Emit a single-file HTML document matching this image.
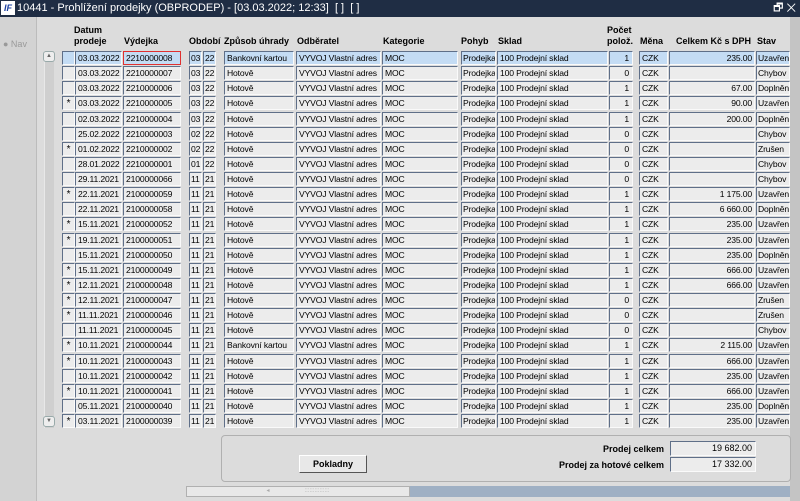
<!DOCTYPE html>
<html><head><meta charset="utf-8">
<style>
*{margin:0;padding:0;box-sizing:border-box}
body{width:800px;height:501px;overflow:hidden;background:#dcdcdc;font-family:"Liberation Sans",sans-serif;font-size:9px;color:#000;position:relative}
#title{position:absolute;left:0;top:0;width:800px;height:17px;background:#1f2d44;color:#fff;font-size:11px;line-height:17px;padding-left:17px}
#logo{position:absolute;left:1px;top:1px;width:14px;height:14px;background:#fff;color:#1a3fa0;font-weight:bold;font-style:italic;font-size:9px;line-height:14px;text-align:center}
#win{position:absolute;right:4px;top:0;color:#fff;font-size:11px;line-height:17px}
#left{position:absolute;left:0;top:17px;width:37px;height:484px;background:#d3d3d3;border-right:1px solid #bcbcbc}
#nav{position:absolute;left:3px;top:22px;color:#999;font-size:9px}
#right{position:absolute;left:790px;top:17px;width:10px;height:484px;background:#c4c4c4}
.h{position:absolute;font-weight:bold;font-size:9px;line-height:11px}
.r{position:absolute;left:0;width:800px;height:15px}
.c{position:absolute;top:0;height:14px;background:#ececec;border:1px solid;border-color:#5f6f88 #fafafa #fafafa #5f6f88;line-height:12px;padding-left:2px;white-space:nowrap;overflow:hidden;font-size:8.6px;letter-spacing:-0.15px}
.sel .c{background:#c4dcf4}
.a{left:62px;width:13px;text-align:center;padding:0;font-size:10px;line-height:14px}
.b{left:75px;width:47px}.d{left:123px;width:58px}
.e{left:189px;width:13px;padding-left:1px}.f{left:203px;width:13px;padding-left:1px}
.g{left:224px;width:70px}.i{left:296px;width:85px}.k{left:382px;width:76px}
.l{left:461px;width:35px;padding-left:1px}.m{left:497px;width:111px}
.n{left:609px;width:24px;text-align:right;padding-right:3px}
.o{left:639px;width:29px}.p{left:669px;width:86px;text-align:right;padding-right:2px}
.q{left:756px;width:34px;padding-left:1px}
.red{border:1px solid #e03030 !important}
#vs{position:absolute;left:44px;top:51px;width:10px;height:377px;background:#cfcfcf;border-left:1px solid #e8e8e8}
.ar{position:absolute;left:43px;width:12px;height:11px;background:#eee;border:1px solid #9aa;border-radius:3px;font-size:6px;line-height:9px;text-align:center;color:#666}
#panel{position:absolute;left:221px;top:435px;width:570px;height:47px;border:1px solid #b0b0b0;border-radius:4px}
#btn{position:absolute;left:299px;top:455px;width:68px;height:18px;background:#e8e8e8;border:1px solid;border-color:#fff #555 #555 #fff;font-weight:bold;text-align:center;line-height:16px}
.lb{position:absolute;right:136px;font-weight:bold}
.fl{position:absolute;left:670px;width:86px;height:15px;background:#ececec;border:1px solid;border-color:#5f6f88 #fafafa #fafafa #5f6f88;text-align:right;padding-right:3px;line-height:13px}
#hs{position:absolute;left:186px;top:486px;width:604px;height:11px;background:#9fb0c4}
#th{position:absolute;left:0;top:0;width:224px;height:11px;background:#e8e8e8;border:1px solid #b0b0b0;color:#aaa;font-size:6px;line-height:8px;text-align:center}
</style></head><body>
<div id="title"><div id="logo">IF</div>10441 - Prohlížení prodejky (OBPRODEP) - [03.03.2022; 12:33]&nbsp; [ ]&nbsp; [ ]<div id="win">🗗 ✕</div></div>
<div id="left"><div id="nav">● Nav</div></div>
<div id="right"></div>
<div class="h" style="left:74px;top:25px">Datum<br>prodeje</div>
<div class="h" style="left:124px;top:36px">Výdejka</div>
<div class="h" style="left:189px;top:36px">Období</div>
<div class="h" style="left:224px;top:36px">Způsob úhrady</div>
<div class="h" style="left:297px;top:36px">Odběratel</div>
<div class="h" style="left:383px;top:36px">Kategorie</div>
<div class="h" style="left:461px;top:36px">Pohyb</div>
<div class="h" style="left:498px;top:36px">Sklad</div>
<div class="h" style="left:607px;top:25px">Počet<br>polož.</div>
<div class="h" style="left:640px;top:36px">Měna</div>
<div class="h" style="left:676px;top:36px">Celkem Kč s DPH</div>
<div class="h" style="left:757px;top:36px">Stav</div>
<div id="vs"></div>
<div class="ar" style="top:51px">▲</div>
<div class="ar" style="top:416px">▼</div>

<div class="r sel" style="top:51px"><span class="c a"></span><span class="c b">03.03.2022</span><span class="c d red">2210000008</span><span class="c e">03</span><span class="c f">22</span><span class="c g">Bankovní kartou</span><span class="c i">VYVOJ Vlastní adres</span><span class="c k">MOC</span><span class="c l">Prodejka</span><span class="c m">100 Prodejní sklad</span><span class="c n">1</span><span class="c o">CZK</span><span class="c p">235.00</span><span class="c q">Uzavřen</span></div>
<div class="r" style="top:66.1px"><span class="c a"></span><span class="c b">03.03.2022</span><span class="c d">2210000007</span><span class="c e">03</span><span class="c f">22</span><span class="c g">Hotově</span><span class="c i">VYVOJ Vlastní adres</span><span class="c k">MOC</span><span class="c l">Prodejka</span><span class="c m">100 Prodejní sklad</span><span class="c n">0</span><span class="c o">CZK</span><span class="c p"></span><span class="c q">Chybov</span></div>
<div class="r" style="top:81.3px"><span class="c a"></span><span class="c b">03.03.2022</span><span class="c d">2210000006</span><span class="c e">03</span><span class="c f">22</span><span class="c g">Hotově</span><span class="c i">VYVOJ Vlastní adres</span><span class="c k">MOC</span><span class="c l">Prodejka</span><span class="c m">100 Prodejní sklad</span><span class="c n">1</span><span class="c o">CZK</span><span class="c p">67.00</span><span class="c q">Doplněn</span></div>
<div class="r" style="top:96.4px"><span class="c a">*</span><span class="c b">03.03.2022</span><span class="c d">2210000005</span><span class="c e">03</span><span class="c f">22</span><span class="c g">Hotově</span><span class="c i">VYVOJ Vlastní adres</span><span class="c k">MOC</span><span class="c l">Prodejka</span><span class="c m">100 Prodejní sklad</span><span class="c n">1</span><span class="c o">CZK</span><span class="c p">90.00</span><span class="c q">Uzavřen</span></div>
<div class="r" style="top:111.5px"><span class="c a"></span><span class="c b">02.03.2022</span><span class="c d">2210000004</span><span class="c e">03</span><span class="c f">22</span><span class="c g">Hotově</span><span class="c i">VYVOJ Vlastní adres</span><span class="c k">MOC</span><span class="c l">Prodejka</span><span class="c m">100 Prodejní sklad</span><span class="c n">1</span><span class="c o">CZK</span><span class="c p">200.00</span><span class="c q">Doplněn</span></div>
<div class="r" style="top:126.6px"><span class="c a"></span><span class="c b">25.02.2022</span><span class="c d">2210000003</span><span class="c e">02</span><span class="c f">22</span><span class="c g">Hotově</span><span class="c i">VYVOJ Vlastní adres</span><span class="c k">MOC</span><span class="c l">Prodejka</span><span class="c m">100 Prodejní sklad</span><span class="c n">0</span><span class="c o">CZK</span><span class="c p"></span><span class="c q">Chybov</span></div>
<div class="r" style="top:141.8px"><span class="c a">*</span><span class="c b">01.02.2022</span><span class="c d">2210000002</span><span class="c e">02</span><span class="c f">22</span><span class="c g">Hotově</span><span class="c i">VYVOJ Vlastní adres</span><span class="c k">MOC</span><span class="c l">Prodejka</span><span class="c m">100 Prodejní sklad</span><span class="c n">0</span><span class="c o">CZK</span><span class="c p"></span><span class="c q">Zrušen</span></div>
<div class="r" style="top:156.9px"><span class="c a"></span><span class="c b">28.01.2022</span><span class="c d">2210000001</span><span class="c e">01</span><span class="c f">22</span><span class="c g">Hotově</span><span class="c i">VYVOJ Vlastní adres</span><span class="c k">MOC</span><span class="c l">Prodejka</span><span class="c m">100 Prodejní sklad</span><span class="c n">0</span><span class="c o">CZK</span><span class="c p"></span><span class="c q">Chybov</span></div>
<div class="r" style="top:172px"><span class="c a"></span><span class="c b">29.11.2021</span><span class="c d">2100000066</span><span class="c e">11</span><span class="c f">21</span><span class="c g">Hotově</span><span class="c i">VYVOJ Vlastní adres</span><span class="c k">MOC</span><span class="c l">Prodejka</span><span class="c m">100 Prodejní sklad</span><span class="c n">0</span><span class="c o">CZK</span><span class="c p"></span><span class="c q">Chybov</span></div>
<div class="r" style="top:187.1px"><span class="c a">*</span><span class="c b">22.11.2021</span><span class="c d">2100000059</span><span class="c e">11</span><span class="c f">21</span><span class="c g">Hotově</span><span class="c i">VYVOJ Vlastní adres</span><span class="c k">MOC</span><span class="c l">Prodejka</span><span class="c m">100 Prodejní sklad</span><span class="c n">1</span><span class="c o">CZK</span><span class="c p">1 175.00</span><span class="c q">Uzavřen</span></div>
<div class="r" style="top:202.3px"><span class="c a"></span><span class="c b">22.11.2021</span><span class="c d">2100000058</span><span class="c e">11</span><span class="c f">21</span><span class="c g">Hotově</span><span class="c i">VYVOJ Vlastní adres</span><span class="c k">MOC</span><span class="c l">Prodejka</span><span class="c m">100 Prodejní sklad</span><span class="c n">1</span><span class="c o">CZK</span><span class="c p">6 660.00</span><span class="c q">Doplněn</span></div>
<div class="r" style="top:217.4px"><span class="c a">*</span><span class="c b">15.11.2021</span><span class="c d">2100000052</span><span class="c e">11</span><span class="c f">21</span><span class="c g">Hotově</span><span class="c i">VYVOJ Vlastní adres</span><span class="c k">MOC</span><span class="c l">Prodejka</span><span class="c m">100 Prodejní sklad</span><span class="c n">1</span><span class="c o">CZK</span><span class="c p">235.00</span><span class="c q">Uzavřen</span></div>
<div class="r" style="top:232.5px"><span class="c a">*</span><span class="c b">19.11.2021</span><span class="c d">2100000051</span><span class="c e">11</span><span class="c f">21</span><span class="c g">Hotově</span><span class="c i">VYVOJ Vlastní adres</span><span class="c k">MOC</span><span class="c l">Prodejka</span><span class="c m">100 Prodejní sklad</span><span class="c n">1</span><span class="c o">CZK</span><span class="c p">235.00</span><span class="c q">Uzavřen</span></div>
<div class="r" style="top:247.6px"><span class="c a"></span><span class="c b">15.11.2021</span><span class="c d">2100000050</span><span class="c e">11</span><span class="c f">21</span><span class="c g">Hotově</span><span class="c i">VYVOJ Vlastní adres</span><span class="c k">MOC</span><span class="c l">Prodejka</span><span class="c m">100 Prodejní sklad</span><span class="c n">1</span><span class="c o">CZK</span><span class="c p">235.00</span><span class="c q">Doplněn</span></div>
<div class="r" style="top:262.8px"><span class="c a">*</span><span class="c b">15.11.2021</span><span class="c d">2100000049</span><span class="c e">11</span><span class="c f">21</span><span class="c g">Hotově</span><span class="c i">VYVOJ Vlastní adres</span><span class="c k">MOC</span><span class="c l">Prodejka</span><span class="c m">100 Prodejní sklad</span><span class="c n">1</span><span class="c o">CZK</span><span class="c p">666.00</span><span class="c q">Uzavřen</span></div>
<div class="r" style="top:277.9px"><span class="c a">*</span><span class="c b">12.11.2021</span><span class="c d">2100000048</span><span class="c e">11</span><span class="c f">21</span><span class="c g">Hotově</span><span class="c i">VYVOJ Vlastní adres</span><span class="c k">MOC</span><span class="c l">Prodejka</span><span class="c m">100 Prodejní sklad</span><span class="c n">1</span><span class="c o">CZK</span><span class="c p">666.00</span><span class="c q">Uzavřen</span></div>
<div class="r" style="top:293px"><span class="c a">*</span><span class="c b">12.11.2021</span><span class="c d">2100000047</span><span class="c e">11</span><span class="c f">21</span><span class="c g">Hotově</span><span class="c i">VYVOJ Vlastní adres</span><span class="c k">MOC</span><span class="c l">Prodejka</span><span class="c m">100 Prodejní sklad</span><span class="c n">0</span><span class="c o">CZK</span><span class="c p"></span><span class="c q">Zrušen</span></div>
<div class="r" style="top:308.1px"><span class="c a">*</span><span class="c b">11.11.2021</span><span class="c d">2100000046</span><span class="c e">11</span><span class="c f">21</span><span class="c g">Hotově</span><span class="c i">VYVOJ Vlastní adres</span><span class="c k">MOC</span><span class="c l">Prodejka</span><span class="c m">100 Prodejní sklad</span><span class="c n">0</span><span class="c o">CZK</span><span class="c p"></span><span class="c q">Zrušen</span></div>
<div class="r" style="top:323.3px"><span class="c a"></span><span class="c b">11.11.2021</span><span class="c d">2100000045</span><span class="c e">11</span><span class="c f">21</span><span class="c g">Hotově</span><span class="c i">VYVOJ Vlastní adres</span><span class="c k">MOC</span><span class="c l">Prodejka</span><span class="c m">100 Prodejní sklad</span><span class="c n">0</span><span class="c o">CZK</span><span class="c p"></span><span class="c q">Chybov</span></div>
<div class="r" style="top:338.4px"><span class="c a">*</span><span class="c b">10.11.2021</span><span class="c d">2100000044</span><span class="c e">11</span><span class="c f">21</span><span class="c g">Bankovní kartou</span><span class="c i">VYVOJ Vlastní adres</span><span class="c k">MOC</span><span class="c l">Prodejka</span><span class="c m">100 Prodejní sklad</span><span class="c n">1</span><span class="c o">CZK</span><span class="c p">2 115.00</span><span class="c q">Uzavřen</span></div>
<div class="r" style="top:353.5px"><span class="c a">*</span><span class="c b">10.11.2021</span><span class="c d">2100000043</span><span class="c e">11</span><span class="c f">21</span><span class="c g">Hotově</span><span class="c i">VYVOJ Vlastní adres</span><span class="c k">MOC</span><span class="c l">Prodejka</span><span class="c m">100 Prodejní sklad</span><span class="c n">1</span><span class="c o">CZK</span><span class="c p">666.00</span><span class="c q">Uzavřen</span></div>
<div class="r" style="top:368.6px"><span class="c a"></span><span class="c b">10.11.2021</span><span class="c d">2100000042</span><span class="c e">11</span><span class="c f">21</span><span class="c g">Hotově</span><span class="c i">VYVOJ Vlastní adres</span><span class="c k">MOC</span><span class="c l">Prodejka</span><span class="c m">100 Prodejní sklad</span><span class="c n">1</span><span class="c o">CZK</span><span class="c p">235.00</span><span class="c q">Uzavřen</span></div>
<div class="r" style="top:383.8px"><span class="c a">*</span><span class="c b">10.11.2021</span><span class="c d">2100000041</span><span class="c e">11</span><span class="c f">21</span><span class="c g">Hotově</span><span class="c i">VYVOJ Vlastní adres</span><span class="c k">MOC</span><span class="c l">Prodejka</span><span class="c m">100 Prodejní sklad</span><span class="c n">1</span><span class="c o">CZK</span><span class="c p">666.00</span><span class="c q">Uzavřen</span></div>
<div class="r" style="top:398.9px"><span class="c a"></span><span class="c b">05.11.2021</span><span class="c d">2100000040</span><span class="c e">11</span><span class="c f">21</span><span class="c g">Hotově</span><span class="c i">VYVOJ Vlastní adres</span><span class="c k">MOC</span><span class="c l">Prodejka</span><span class="c m">100 Prodejní sklad</span><span class="c n">1</span><span class="c o">CZK</span><span class="c p">235.00</span><span class="c q">Doplněn</span></div>
<div class="r" style="top:414px"><span class="c a">*</span><span class="c b">03.11.2021</span><span class="c d">2100000039</span><span class="c e">11</span><span class="c f">21</span><span class="c g">Hotově</span><span class="c i">VYVOJ Vlastní adres</span><span class="c k">MOC</span><span class="c l">Prodejka</span><span class="c m">100 Prodejní sklad</span><span class="c n">1</span><span class="c o">CZK</span><span class="c p">235.00</span><span class="c q">Uzavřen</span></div>

<div id="panel"></div>
<div id="btn">Pokladny</div>
<div class="lb" style="top:444px">Prodej celkem</div>
<div class="lb" style="top:460px">Prodej za hotové celkem</div>
<div class="fl" style="top:441px">19 682.00</div>
<div class="fl" style="top:457px">17 332.00</div>
<div id="hs"><div id="th">◂ &nbsp;&nbsp;&nbsp;&nbsp;&nbsp;&nbsp;&nbsp;&nbsp;&nbsp;&nbsp;&nbsp;&nbsp;&nbsp;&nbsp;&nbsp;&nbsp;&nbsp;&nbsp;&nbsp;&nbsp;:::::::::::::::</div></div>
</body></html>
